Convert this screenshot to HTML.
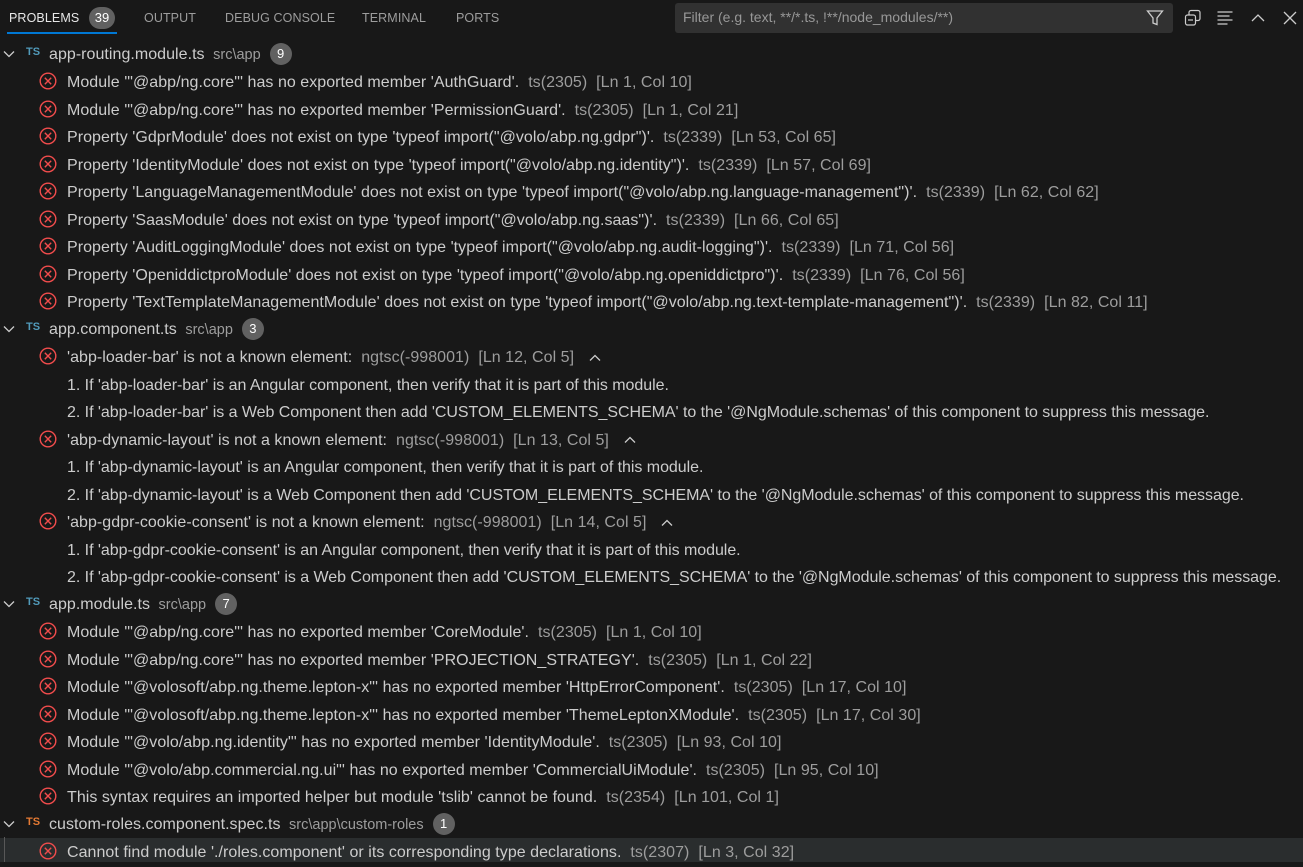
<!DOCTYPE html>
<html><head><meta charset="utf-8"><style>
*{margin:0;padding:0;box-sizing:border-box}
body{width:1303px;height:862px;background:#181818;color:#cccccc;font-family:"Segoe UI","Liberation Sans",sans-serif;font-size:16px;letter-spacing:0.04px;overflow:hidden;position:relative}
.tabs{position:absolute;top:0;left:0;height:36px;width:100%;letter-spacing:0}
.tab{position:absolute;top:11px;font-size:12.5px;color:#9d9d9d;letter-spacing:0.1px}
.badge{display:inline-block;background:#616161;color:#fff;border-radius:11px;text-align:center;font-size:13px;line-height:22px;height:22px;letter-spacing:0}
.ul{position:absolute;left:7px;top:32px;width:110px;height:1.5px;background:#0078d4}
.filter{position:absolute;left:675px;top:3px;width:498px;height:30px;background:#313131;border-radius:3px;color:#989898;font-size:14px;padding:6px 8px}
.row{position:absolute;left:0;width:100%;height:27.5px;line-height:27.5px;white-space:nowrap}
.g{color:#9d9d9d}
.ico{position:absolute;left:39px;top:5px}
.t{position:absolute;left:67px;top:2px}
.chev{position:absolute;left:2px;top:7px}
.ts{position:absolute;left:26px;top:-1px;font-size:11px;font-weight:bold;color:#519aba;letter-spacing:0}
.fn{position:absolute;left:49px;top:1px}
.up{display:inline-block;vertical-align:middle;margin-left:14px}
</style></head><body>
<div class="tabs">
<div class="tab" style="left:9px;color:#e7e7e7">PROBLEMS</div>
<div class="badge" style="position:absolute;left:89px;top:7px;width:26px">39</div>
<div class="tab" style="left:144px">OUTPUT</div>
<div class="tab" style="left:225px">DEBUG CONSOLE</div>
<div class="tab" style="left:362px">TERMINAL</div>
<div class="tab" style="left:456px">PORTS</div>
<div class="ul"></div>
<div class="filter">Filter (e.g. text, **/*.ts, !**/node_modules/**)</div>
<svg style="position:absolute;left:1146px;top:9px" width="18" height="18" viewBox="0 0 18 18"><path d="M1.5 2h15l-5.5 7v6.5l-4 -1.5v-5z" fill="none" stroke="#ccc" stroke-width="1.3"/></svg>
<svg style="position:absolute;left:1184px;top:9px" width="18" height="18" viewBox="0 0 18 18"><rect x="5" y="1.5" width="11" height="10" rx="2" fill="none" stroke="#ccc" stroke-width="1.2"/><rect x="1.5" y="6" width="10" height="10" rx="2" fill="#181818" stroke="#ccc" stroke-width="1.2"/><path d="M4 11h5" stroke="#ccc" stroke-width="1.2"/></svg>
<svg style="position:absolute;left:1216px;top:9px" width="18" height="18" viewBox="0 0 18 18"><path d="M1.5 3h15M1.5 7h12M1.5 11h15M1.5 15h10" stroke="#ccc" stroke-width="1.3"/></svg>
<svg style="position:absolute;left:1249px;top:9px" width="18" height="18" viewBox="0 0 18 18"><path d="M3 12l6-6 6 6" fill="none" stroke="#ccc" stroke-width="1.3"/></svg>
<svg style="position:absolute;left:1281px;top:9px" width="18" height="18" viewBox="0 0 18 18"><path d="M3 3l12 12M15 3L3 15" stroke="#ccc" stroke-width="1.3"/></svg>
</div>
<div id="list"></div>
<div style="position:absolute;left:0;top:837.5px;width:1303px;height:24.5px;background:#2a2d2e"></div>
<div style="position:absolute;left:4px;top:837px;width:1px;height:25px;background:#585858"></div>
<script>
const E='<svg class="ico" width="18" height="18" viewBox="0 0 18 18"><circle cx="9" cy="9" r="7.8" fill="none" stroke="#f14c4c" stroke-width="1.4"/><path d="M5.8 5.8l6.4 6.4M12.2 5.8l-6.4 6.4" stroke="#f14c4c" stroke-width="1.4"/></svg>';
const C='<svg class="chev" width="14" height="14" viewBox="0 0 14 14"><path d="M2 4.5l5 5 5-5" fill="none" stroke="#ccc" stroke-width="1.3"/></svg>';
const U='<svg class="up" width="14" height="14" viewBox="0 0 14 14"><path d="M2 9.5l5-5 5 5" fill="none" stroke="#ccc" stroke-width="1.3"/></svg>';
function F(n,p,c,col){return C+'<span class="ts" style="color:'+(col||'#519aba')+'">TS</span><span class="fn">'+n+' <span class="g" style="font-size:14.5px;letter-spacing:0">&nbsp;'+p+'</span> &nbsp;<span class="badge" style="width:22px;vertical-align:middle;line-height:22px">'+c+'</span></span>'}
function M(m,code,loc,up){return E+'<span class="t">'+m+' &nbsp;<span class="g">'+code+'&nbsp; '+loc+'</span>'+(up?U:'')+'</span>'}
function D(m){return '<span class="t" style="letter-spacing:-0.04px">'+m+'</span>'}
const rows=[
F('app-routing.module.ts','src\\app','9'),
M("Module '\"@abp/ng.core\"' has no exported member 'AuthGuard'.","ts(2305)","[Ln 1, Col 10]"),
M("Module '\"@abp/ng.core\"' has no exported member 'PermissionGuard'.","ts(2305)","[Ln 1, Col 21]"),
M("Property 'GdprModule' does not exist on type 'typeof import(\"@volo/abp.ng.gdpr\")'.","ts(2339)","[Ln 53, Col 65]"),
M("Property 'IdentityModule' does not exist on type 'typeof import(\"@volo/abp.ng.identity\")'.","ts(2339)","[Ln 57, Col 69]"),
M("Property 'LanguageManagementModule' does not exist on type 'typeof import(\"@volo/abp.ng.language-management\")'.","ts(2339)","[Ln 62, Col 62]"),
M("Property 'SaasModule' does not exist on type 'typeof import(\"@volo/abp.ng.saas\")'.","ts(2339)","[Ln 66, Col 65]"),
M("Property 'AuditLoggingModule' does not exist on type 'typeof import(\"@volo/abp.ng.audit-logging\")'.","ts(2339)","[Ln 71, Col 56]"),
M("Property 'OpeniddictproModule' does not exist on type 'typeof import(\"@volo/abp.ng.openiddictpro\")'.","ts(2339)","[Ln 76, Col 56]"),
M("Property 'TextTemplateManagementModule' does not exist on type 'typeof import(\"@volo/abp.ng.text-template-management\")'.","ts(2339)","[Ln 82, Col 11]"),
F('app.component.ts','src\\app','3'),
M("'abp-loader-bar' is not a known element:","ngtsc(-998001)","[Ln 12, Col 5]",1),
D("1. If 'abp-loader-bar' is an Angular component, then verify that it is part of this module."),
D("2. If 'abp-loader-bar' is a Web Component then add 'CUSTOM_ELEMENTS_SCHEMA' to the '@NgModule.schemas' of this component to suppress this message."),
M("'abp-dynamic-layout' is not a known element:","ngtsc(-998001)","[Ln 13, Col 5]",1),
D("1. If 'abp-dynamic-layout' is an Angular component, then verify that it is part of this module."),
D("2. If 'abp-dynamic-layout' is a Web Component then add 'CUSTOM_ELEMENTS_SCHEMA' to the '@NgModule.schemas' of this component to suppress this message."),
M("'abp-gdpr-cookie-consent' is not a known element:","ngtsc(-998001)","[Ln 14, Col 5]",1),
D("1. If 'abp-gdpr-cookie-consent' is an Angular component, then verify that it is part of this module."),
D("2. If 'abp-gdpr-cookie-consent' is a Web Component then add 'CUSTOM_ELEMENTS_SCHEMA' to the '@NgModule.schemas' of this component to suppress this message."),
F('app.module.ts','src\\app','7'),
M("Module '\"@abp/ng.core\"' has no exported member 'CoreModule'.","ts(2305)","[Ln 1, Col 10]"),
M("Module '\"@abp/ng.core\"' has no exported member 'PROJECTION_STRATEGY'.","ts(2305)","[Ln 1, Col 22]"),
M("Module '\"@volosoft/abp.ng.theme.lepton-x\"' has no exported member 'HttpErrorComponent'.","ts(2305)","[Ln 17, Col 10]"),
M("Module '\"@volosoft/abp.ng.theme.lepton-x\"' has no exported member 'ThemeLeptonXModule'.","ts(2305)","[Ln 17, Col 30]"),
M("Module '\"@volo/abp.ng.identity\"' has no exported member 'IdentityModule'.","ts(2305)","[Ln 93, Col 10]"),
M("Module '\"@volo/abp.commercial.ng.ui\"' has no exported member 'CommercialUiModule'.","ts(2305)","[Ln 95, Col 10]"),
M("This syntax requires an imported helper but module 'tslib' cannot be found.","ts(2354)","[Ln 101, Col 1]"),
F('custom-roles.component.spec.ts','src\\app\\custom-roles','1','#e37933'),
M("Cannot find module './roles.component' or its corresponding type declarations.","ts(2307)","[Ln 3, Col 32]")
];
let h='';rows.forEach((r,i)=>{h+='<div class="row" style="top:'+(39.5+i*27.5)+'px;'+(i==29?'z-index:2':'')+'">'+r+'</div>'});
document.getElementById('list').innerHTML=h;
</script>
</body></html>
